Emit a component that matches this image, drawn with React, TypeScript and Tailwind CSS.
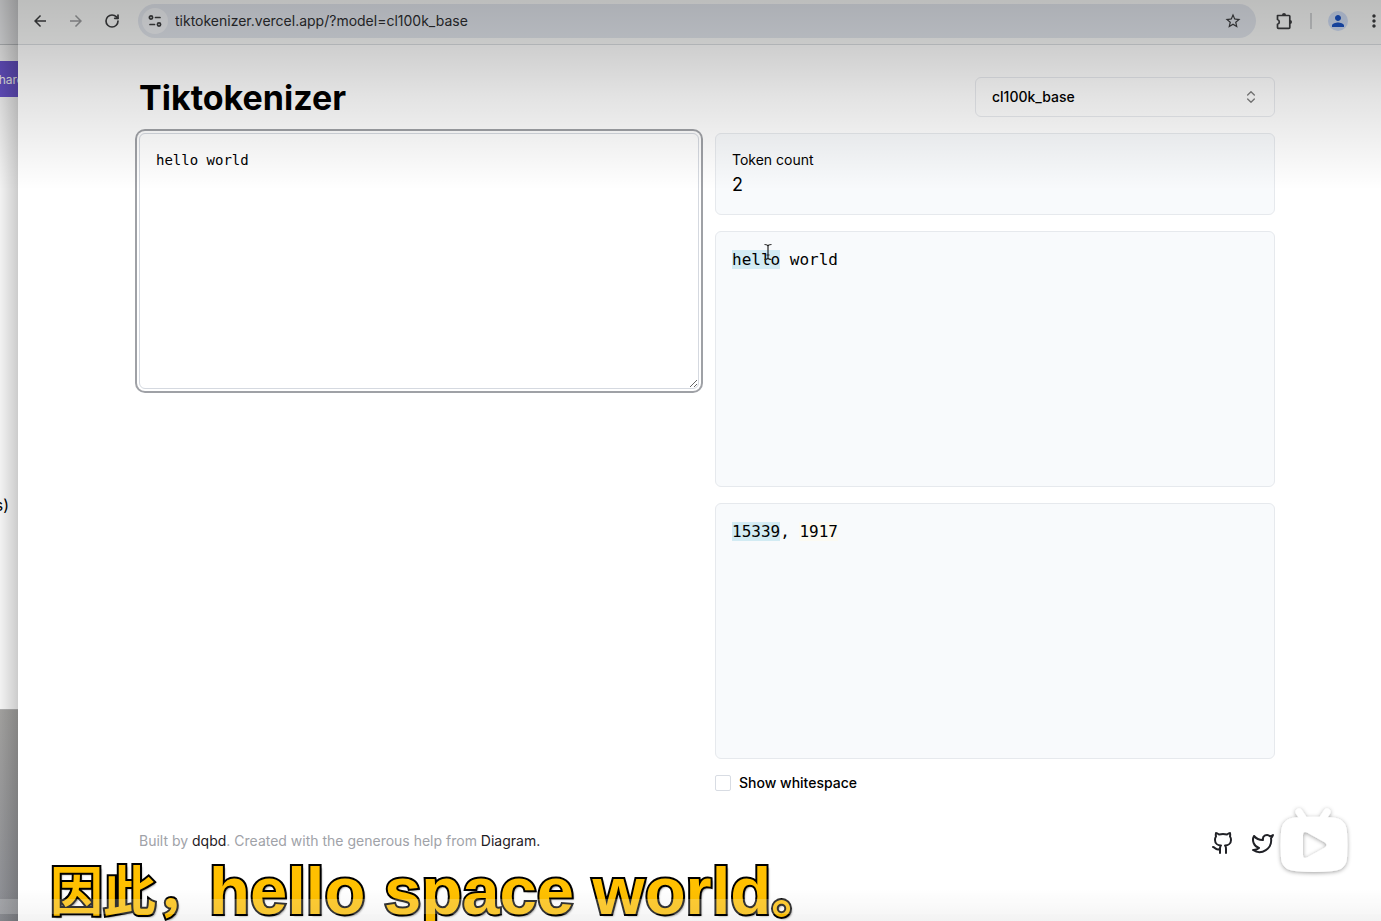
import { ChevronsUpDown, Github, RotateCw, Twitter } from "lucide-react";
import { MdArrowBack, MdArrowForward, MdMoreVert, MdPerson, MdStarBorder } from "react-icons/md";

function TuneIcon() {
  return (
    <svg viewBox="0 0 16 16" className="size-4" fill="none" stroke="currentColor" strokeWidth="1.7" strokeLinecap="round">
      <circle cx="4" cy="4.5" r="1.6" />
      <path d="M8.500 4.500H13M3 11.500h4.500" />
      <circle cx="12" cy="11.5" r="1.6" />
    </svg>
  );
}

function ExtensionIcon() {
  return (
    <svg viewBox="0 0 20 20" className="size-5" fill="none" stroke="currentColor" strokeWidth="1.7" strokeLinejoin="round">
      <path d="M3.500 4.500H15q.8 0 .8.8v11.200q0 .8-.8.8H4.300q-.8 0-.8-.8v-3.200a2.500 2.500 0 0 0 0-4.800z" />
      <path d="M8 4a2 2 0 0 1 4 0zM16 9a2 2 0 0 1 0 4z" fill="currentColor" stroke="none" />
    </svg>
  );
}

function Toolbar() {
  return (
    <header className="flex h-[45px] items-center border-b border-[#d9dde0] bg-[#f8f9f8] pl-3 text-[#3c3d3f]">
      <div className="flex h-full w-[108px] items-center pb-[3px]">
        <button aria-label="Back" className="flex w-5 justify-center"><MdArrowBack size={18} /></button>
        <button aria-label="Forward" className="ml-4 flex w-5 justify-center text-[#9b9c9e]"><MdArrowForward size={18} /></button>
        <button aria-label="Reload" className="ml-4 flex w-5 justify-center"><RotateCw size={16} strokeWidth={2.5} /></button>
      </div>
      <div className="mb-[3px] flex h-[34px] min-w-0 flex-1 items-center rounded-full bg-[#e1e5ec] pr-[14px] pl-1">
        <button aria-label="Site information" className="flex size-[26px] items-center justify-center rounded-full bg-[#f0f2f5]"><TuneIcon /></button>
        <input aria-label="Address" readOnly value="tiktokenizer.vercel.app/?model=cl100k_base" className="ml-[7px] min-w-0 flex-1 bg-transparent text-sm text-[#2c2d30] outline-none" />
        <button aria-label="Bookmark"><MdStarBorder size={18} /></button>
      </div>
      <div className="mb-[3px] ml-[18px] flex items-center">
        <button aria-label="Extensions"><ExtensionIcon /></button>
        <span className="mx-4 h-4 w-0.5 bg-[#d0d2d4]" />
        <button aria-label="Profile" className="flex size-5 items-center justify-center rounded-full bg-[#cfdcf4] text-[#1a52c4]"><MdPerson size={18} /></button>
        <button aria-label="More" className="ml-4 flex w-[17px] justify-start"><MdMoreVert size={20} className="shrink-0" /></button>
      </div>
    </header>
  );
}

function BackWindow() {
  return (
    <aside className="relative flex w-[18px] shrink-0 flex-col overflow-hidden bg-white text-black">
      <div className="h-[45px] shrink-0 border-b border-[#c5c8cb] bg-[#f3f4f6]" />
      <button className="mt-4 flex h-9 w-14 shrink-0 items-center bg-[#6b55d0] text-xs text-white">
        <span className="-ml-[9px] pt-0.5">Share</span>
      </button>
      <p className="mt-[396px] flex justify-end pr-[9px] text-base leading-6">(tokens)</p>
      <div className="mt-[192px] flex-1 border-t border-[#b5b5b5] bg-linear-to-b from-[#a8a7a5] to-[#92949a]" />
      <div className="absolute inset-0 bg-linear-to-r from-black/5 to-black/20" />
    </aside>
  );
}

function Tokenizer() {
  return (
    <main className="pt-8 pr-[106px] pl-[121px]">
      <div className="flex h-10 items-center justify-between">
        <h1 className="pt-0.5 text-[34px] leading-10 font-bold">Tiktokenizer</h1>
        <div className="relative w-[300px]">
          <select aria-label="Model" className="block h-10 w-full appearance-none rounded-md border border-[#e8eaee] bg-transparent px-4 text-sm font-medium">
            <option>cl100k_base</option>
          </select>
          <ChevronsUpDown size={16} className="pointer-events-none absolute top-3 right-4 opacity-50" />
        </div>
      </div>
      <div className="mt-4 grid grid-cols-2 items-start gap-4">
        <textarea
          aria-label="Text to tokenize"
          defaultValue="hello world"
          spellCheck={false}
          className="block h-64 w-full rounded-md border border-[#d5d9e0] bg-white p-4 font-['DejaVu_Sans_Mono',monospace] text-sm leading-5 ring-2 ring-[#9fa1a6] ring-offset-2 outline-none"
        />
        <div className="flex flex-col gap-4">
          <section className="h-[82px] rounded-md border border-[#e6e9ed] bg-[#f8fafc] p-4">
            <h2 className="text-sm leading-5">Token count</h2>
            <p className="text-lg leading-[30px]">2</p>
          </section>
          <section className="h-64 rounded-md border border-[#e6e9ed] bg-[#f8fafc] p-4 font-['DejaVu_Sans_Mono',monospace] leading-6">
            <span className="bg-[#d2ebf3]">hello</span><span> world</span>
          </section>
          <section className="h-64 rounded-md border border-[#e6e9ed] bg-[#f8fafc] p-4 font-['DejaVu_Sans_Mono',monospace] leading-6">
            <span className="bg-[#d2ebf3]">15339</span>, <span className="bg-[#fcfaf2]">1917</span>
          </section>
          <label className="flex h-4 items-center gap-2 text-sm font-medium">
            <input type="checkbox" className="size-4 appearance-none rounded-xs border border-[#d8dce3]" />
            Show whitespace
          </label>
        </div>
      </div>
      <footer className="mt-10 flex h-6 items-center justify-between text-sm text-[#a0a2a8]">
        <p className="pb-1">
          Built by <a href="#dqbd" className="text-[#1f2024]">dqbd</a>. Created with the generous help from{" "}
          <a href="#diagram" className="text-[#1f2024]">Diagram.</a>
        </p>
        <nav className="flex gap-4 text-[#202126]">
          <a href="#github" aria-label="GitHub"><Github size={24} /></a>
          <a href="#twitter" aria-label="Twitter"><Twitter size={24} /></a>
        </nav>
      </footer>
    </main>
  );
}

function TextCursor() {
  return (
    <svg viewBox="0 0 10 18" className="absolute top-[243px] left-[763px] h-[18px] w-[10px]" fill="none" stroke="#222" strokeWidth="1.2">
      <path d="M1.500 1.500Q4.500 1.500 5 3Q5.500 1.500 8.500 1.500M5 3V15M1.500 16.500Q4.500 16.500 5 15Q5.500 16.500 8.500 16.500M3.500 12H6.500" />
    </svg>
  );
}

function PlayBadge() {
  return (
    <button aria-label="Play" className="absolute right-[25px] bottom-[39px]">
      <svg viewBox="0 0 84 82" className="h-[82px] w-[84px]">
        <defs>
          <filter id="badge-shadow" x="-20%" y="-20%" width="140%" height="140%">
            <feDropShadow dx="0" dy="1" stdDeviation="2" floodColor="#000" floodOpacity="0.38" />
          </filter>
        </defs>
        <g filter="url(#badge-shadow)" fill="#fff">
          <path d="M27 12l6 9M55 12l-6 9" stroke="#fff" strokeWidth="7" strokeLinecap="round" />
          <path fillRule="evenodd" d="M23 17.500Q42 16 61 17.500Q74 18.500 75 32Q76 45 75 58Q74 70 61 71Q42 73 23 71Q10 70 9 58Q8 45 9 32Q10 18.500 23 17.500ZM31 35v20q0 4 4 2.500L53 47.500q3-2.500 0-5L35 32.500q-4-1.500-4 2.500Z" />
        </g>
      </svg>
    </button>
  );
}

function Subtitle() {
  return (
    <p className="absolute -bottom-5 left-[50px] flex items-start font-['Liberation_Sans','Noto_Sans_CJK_SC',sans-serif] text-[67px] leading-[92px] font-bold whitespace-nowrap text-[#ffc000] [-webkit-text-stroke:4px_black] [paint-order:stroke_fill] [text-shadow:2px_2px_2px_rgba(0,0,0,0.5)]">
      <span className="pt-0.5 text-[53px]">因此，</span>
      <span>hello space world</span>
      <span className="pt-1 text-[53px]">。</span>
    </p>
  );
}

export default function App() {
  return (
    <div className="relative flex min-h-screen overflow-hidden bg-white font-['Inter',sans-serif] text-black">
      <BackWindow />
      <div className="-ml-px min-w-0 flex-1 border-l border-[#b9b9b9]">
        <Toolbar />
        <Tokenizer />
      </div>
      <TextCursor />
      <div className="pointer-events-none absolute inset-x-0 top-0 h-[190px] bg-[linear-gradient(to_bottom,rgba(0,0,0,0.24),rgba(0,0,0,0.185)_50px,rgba(0,0,0,0.11)_97px,rgba(0,0,0,0.07)_130px,transparent)]" />
      <Subtitle />
      <PlayBadge />
      <div className="pointer-events-none absolute inset-x-0 bottom-0 h-8 bg-linear-to-b from-transparent to-black/5" />
      <div className="pointer-events-none absolute inset-x-0 bottom-[7px] h-[15px] bg-white/20" />
    </div>
  );
}
